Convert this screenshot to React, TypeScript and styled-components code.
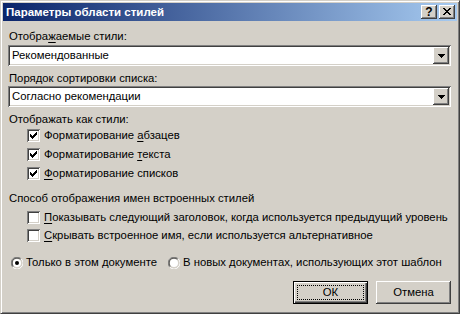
import React from 'react';
import styled, { createGlobalStyle } from 'styled-components';

const Global = createGlobalStyle`
  html, body { margin: 0; padding: 0; background: #D4D0C8; }
  body { font-family: "Liberation Sans", Arial, sans-serif; font-size: 11.3px; color: #000; }
  #root { width: 460px; height: 314px; }
  u { text-decoration: underline; text-underline-offset: 2px; }
`;

const Window = styled.div`
  box-sizing: border-box;
  width: 460px;
  height: 314px;
  background: #D4D0C8;
  border: 1px solid;
  border-color: #D4D0C8 #404040 #404040 #D4D0C8;
  box-shadow: inset 1px 1px 0 #FFFFFF, inset -1px -1px 0 #808080;
  padding: 2px;
  display: flex;
  flex-direction: column;
`;

const TitleBar = styled.div`
  height: 18px;
  flex: 0 0 18px;
  background: linear-gradient(to right, #0A246A, #A6CAF0);
  display: flex;
  align-items: center;
  justify-content: space-between;
  padding: 0 2px;
`;

const TitleText = styled.div`
  color: #FFFFFF;
  font-family: "Liberation Sans", Arial, sans-serif;
  font-weight: bold;
  font-size: 11.5px;
  line-height: 18px;
  white-space: nowrap;
  padding-left: 1px;
`;

const CaptionButtons = styled.div`
  display: flex;
  gap: 2px;
`;

const Raised = `
  background: #D4D0C8;
  box-shadow: inset -1px -1px 0 #404040, inset 1px 1px 0 #FFFFFF,
    inset -2px -2px 0 #808080, inset 2px 2px 0 #D4D0C8;
`;

const CaptionButton = styled.div`
  box-sizing: border-box;
  width: 16px;
  height: 14px;
  ${Raised}
  display: flex;
  align-items: center;
  justify-content: center;
  font-family: "Liberation Sans", Arial, sans-serif;
  font-weight: bold;
  font-size: 12px;
  line-height: 14px;
  padding-bottom: 1px;
`;

const Body = styled.div`
  flex: 1;
  display: flex;
  flex-direction: column;
  padding: 9px 6px 0 5px;
`;

const FieldLabel = styled.div<{ $mt: number }>`
  margin-top: ${(p) => p.$mt}px;
  margin-left: 1px;
  height: 13px;
  line-height: 13px;
  white-space: nowrap;
`;

const Sunken = `
  box-shadow: inset 1px 1px 0 #808080, inset -1px -1px 0 #FFFFFF,
    inset 2px 2px 0 #404040, inset -2px -2px 0 #D4D0C8;
`;

const ComboBox = styled.div<{ $mt: number }>`
  box-sizing: border-box;
  margin-top: ${(p) => p.$mt}px;
  height: 21px;
  background: #FFFFFF;
  ${Sunken}
  padding: 2px;
  display: flex;
  align-items: center;
`;

const ComboText = styled.div`
  flex: 1;
  padding-left: 2px;
  line-height: 17px;
  white-space: nowrap;
`;

const DropButton = styled.div`
  box-sizing: border-box;
  width: 16px;
  height: 17px;
  ${Raised}
  display: flex;
  align-items: center;
  justify-content: center;
`;

const CheckRow = styled.div<{ $mt: number }>`
  margin-top: ${(p) => p.$mt}px;
  margin-left: 19px;
  height: 13px;
  display: flex;
  align-items: center;
`;

const CheckBox = styled.div`
  box-sizing: border-box;
  width: 13px;
  height: 13px;
  flex: 0 0 13px;
  background: #FFFFFF;
  ${Sunken}
  padding: 2px;
  display: flex;
`;

const CheckLabel = styled.span`
  margin-left: 4px;
  line-height: 13px;
  white-space: nowrap;
`;

const RadioRow = styled.div`
  margin-top: 14px;
  margin-left: 3px;
  height: 13px;
  display: flex;
  align-items: center;
  gap: 11px;
`;

const RadioItem = styled.div`
  display: flex;
  align-items: center;
`;

const RadioLabel = styled.span`
  margin-left: 3px;
  line-height: 13px;
  white-space: nowrap;
`;

const ButtonRow = styled.div`
  margin-top: 12px;
  display: flex;
  justify-content: flex-end;
  gap: 8px;
`;

const PushButton = styled.div<{ $default?: boolean }>`
  box-sizing: border-box;
  width: 75px;
  height: 23px;
  background: #D4D0C8;
  display: flex;
  padding: 3px;
  ${(p) =>
    p.$default
      ? `border: 1px solid #000000;
         box-shadow: inset 1px 1px 0 #FFFFFF, inset -1px -1px 0 #404040, inset -2px -2px 0 #808080;`
      : `box-shadow: inset -1px -1px 0 #404040, inset 1px 1px 0 #FFFFFF,
           inset -2px -2px 0 #808080, inset 2px 2px 0 #D4D0C8;
         padding: 4px;`}
`;

const ButtonFace = styled.div<{ $focus?: boolean }>`
  flex: 1;
  display: flex;
  align-items: center;
  justify-content: center;
  box-sizing: border-box;
  border: 1px ${(p) => (p.$focus ? 'dotted #000000' : 'solid transparent')};
  line-height: 13px;
`;

const CheckMark = () => (
  <svg width="7" height="7" viewBox="0 0 7 7" shapeRendering="crispEdges" style={{ margin: '1px 0 0 1px' }}>
    <g fill="#000">
      <rect x="6" y="0" width="1" height="1" />
      <rect x="5" y="1" width="2" height="1" />
      <rect x="0" y="2" width="1" height="1" />
      <rect x="4" y="2" width="3" height="1" />
      <rect x="0" y="3" width="2" height="1" />
      <rect x="3" y="3" width="3" height="1" />
      <rect x="0" y="4" width="5" height="1" />
      <rect x="1" y="5" width="3" height="1" />
      <rect x="2" y="6" width="1" height="1" />
    </g>
  </svg>
);

const CloseGlyph = () => (
  <svg width="8" height="7" viewBox="0 0 8 7" shapeRendering="crispEdges">
    <g fill="#000">
      <rect x="0" y="0" width="2" height="1" />
      <rect x="6" y="0" width="2" height="1" />
      <rect x="1" y="1" width="2" height="1" />
      <rect x="5" y="1" width="2" height="1" />
      <rect x="2" y="2" width="4" height="1" />
      <rect x="3" y="3" width="2" height="1" />
      <rect x="2" y="4" width="4" height="1" />
      <rect x="1" y="5" width="2" height="1" />
      <rect x="5" y="5" width="2" height="1" />
      <rect x="0" y="6" width="2" height="1" />
      <rect x="6" y="6" width="2" height="1" />
    </g>
  </svg>
);

const DownArrow = () => (
  <svg width="7" height="4" viewBox="0 0 7 4" shapeRendering="crispEdges">
    <g fill="#000">
      <rect x="0" y="0" width="7" height="1" />
      <rect x="1" y="1" width="5" height="1" />
      <rect x="2" y="2" width="3" height="1" />
      <rect x="3" y="3" width="1" height="1" />
    </g>
  </svg>
);

const RadioGlyph = ({ checked }: { checked?: boolean }) => (
  <svg width="12" height="12" viewBox="0 0 12 12">
    <path d="M 10.2 1.8 A 5.5 5.5 0 0 0 1.8 10.2" fill="none" stroke="#808080" strokeWidth="1" />
    <path d="M 1.8 10.2 A 5.5 5.5 0 0 0 10.2 1.8" fill="none" stroke="#FFFFFF" strokeWidth="1" />
    <path d="M 9.5 2.5 A 4.5 4.5 0 0 0 2.5 9.5" fill="none" stroke="#404040" strokeWidth="1" />
    <path d="M 2.5 9.5 A 4.5 4.5 0 0 0 9.5 2.5" fill="none" stroke="#D4D0C8" strokeWidth="1" />
    <circle cx="6" cy="6" r="4" fill="#FFFFFF" />
    {checked && <circle cx="6" cy="6" r="2" fill="#000" />}
  </svg>
);

const Check = ({ mt, checked, children }: { mt: number; checked?: boolean; children: React.ReactNode }) => (
  <CheckRow $mt={mt}>
    <CheckBox>{checked && <CheckMark />}</CheckBox>
    <CheckLabel>{children}</CheckLabel>
  </CheckRow>
);

const Combo = ({ mt, value }: { mt: number; value: string }) => (
  <ComboBox $mt={mt}>
    <ComboText>{value}</ComboText>
    <DropButton>
      <DownArrow />
    </DropButton>
  </ComboBox>
);

export default function App() {
  return (
    <>
      <Global />
      <Window>
        <TitleBar>
          <TitleText>Параметры области стилей</TitleText>
          <CaptionButtons>
            <CaptionButton>?</CaptionButton>
            <CaptionButton>
              <CloseGlyph />
            </CaptionButton>
          </CaptionButtons>
        </TitleBar>
        <Body>
          <FieldLabel $mt={0}>
            Отобра<u>ж</u>аемые стили:
          </FieldLabel>
          <Combo mt={2} value="Рекомендованные" />
          <FieldLabel $mt={6}>Порядок сортировки списка:</FieldLabel>
          <Combo mt={1} value="Согласно рекомендации" />
          <FieldLabel $mt={6}>Отображать как стили:</FieldLabel>
          <Check mt={3} checked>
            Форматирование <u>а</u>бзацев
          </Check>
          <Check mt={6} checked>
            Форматирование <u>т</u>екста
          </Check>
          <Check mt={6} checked>
            <u>Ф</u>орматирование списков
          </Check>
          <FieldLabel $mt={12}>Способ отображения имен встроенных стилей</FieldLabel>
          <Check mt={6}>
            <u>П</u>оказывать следующий заголовок, когда используется предыдущий уровень
          </Check>
          <Check mt={5}>
            <u>С</u>крывать встроенное имя, если используется альтернативное
          </Check>
          <RadioRow>
            <RadioItem>
              <RadioGlyph checked />
              <RadioLabel>Только в этом документе</RadioLabel>
            </RadioItem>
            <RadioItem>
              <RadioGlyph />
              <RadioLabel>В новых документах, использующих этот шаблон</RadioLabel>
            </RadioItem>
          </RadioRow>
          <ButtonRow>
            <PushButton $default>
              <ButtonFace $focus>ОК</ButtonFace>
            </PushButton>
            <PushButton>
              <ButtonFace>Отмена</ButtonFace>
            </PushButton>
          </ButtonRow>
        </Body>
      </Window>
    </>
  );
}
